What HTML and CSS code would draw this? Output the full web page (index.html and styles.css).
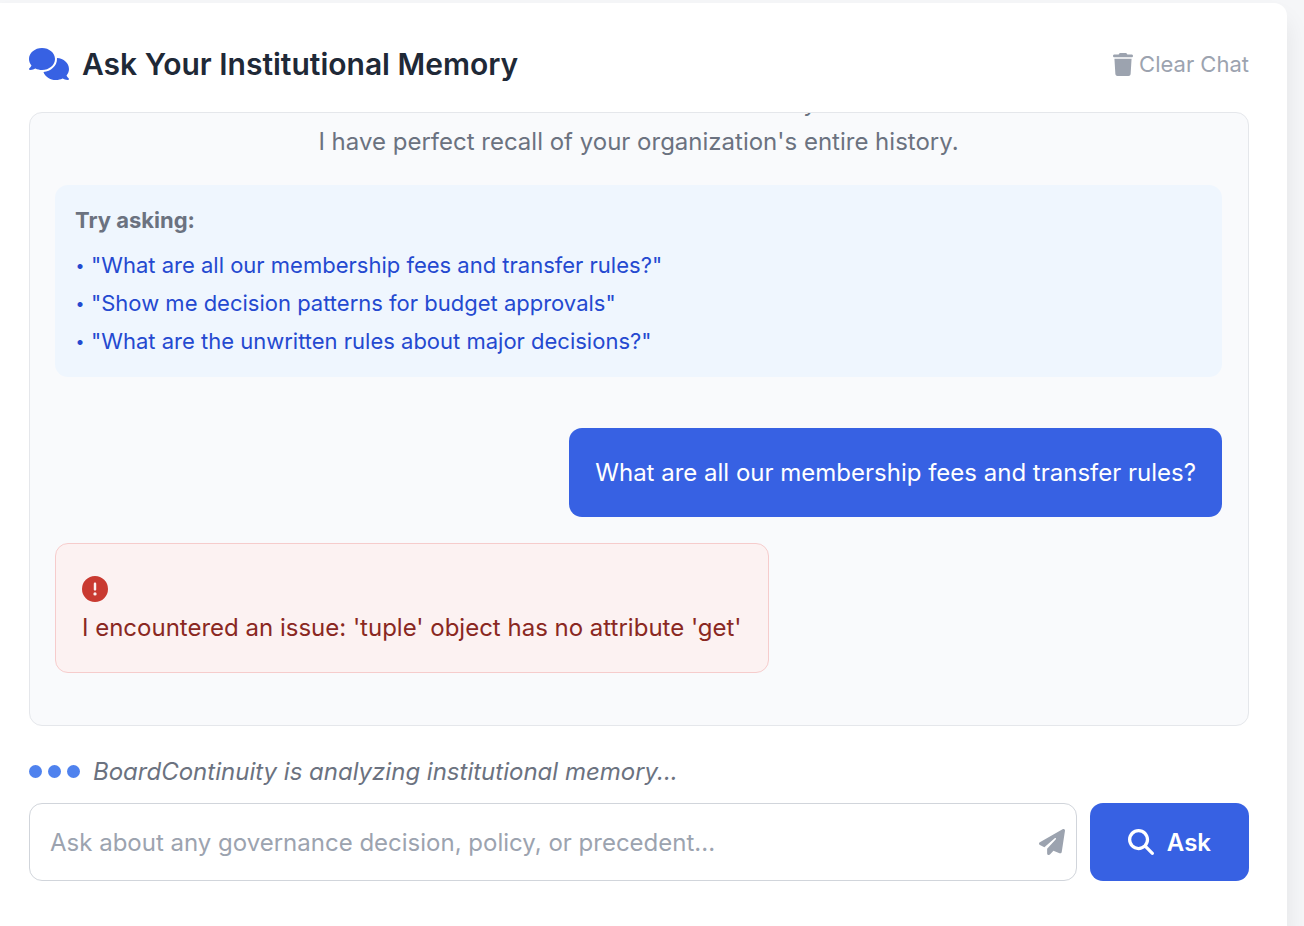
FILE: index.html
```html
<!DOCTYPE html>
<html lang="en">
<head>
<meta charset="utf-8">
<meta name="viewport" content="width=device-width, initial-scale=1">
<title>Ask Your Institutional Memory</title>
<link rel="stylesheet" href="styles.css">
</head>
<body>
<main class="card">
  <header class="card-header">
    <h1 class="title">
      <svg class="icon-comments" viewBox="0 0 640 512" aria-hidden="true"><path d="M208 352c114.900 0 208-78.800 208-176S322.900 0 208 0S0 78.800 0 176c0 38.600 14.700 74.300 39.600 103.400c-3.500 9.400-8.700 17.700-14.200 24.700c-4.800 6.200-9.700 11-13.300 14.300c-1.800 1.600-3.300 2.900-4.300 3.700c-.5 .4-.9 .7-1.100 .8l-.2 .2C1 327.200-1.400 334.400 .8 340.900S9.100 352 16 352c21.800 0 43.800-5.600 62.100-12.500c9.200-3.500 17.800-7.400 25.200-11.400C134.100 343.300 169.800 352 208 352zM448 176c0 112.300-99.100 196.900-216.500 207C255.800 457.400 336.400 512 432 512c38.200 0 73.900-8.700 104.700-23.900c7.500 4 16 7.900 25.200 11.400c18.300 6.900 40.300 12.500 62.100 12.500c6.900 0 13.100-4.500 15.200-11.100c2.100-6.600-.2-13.800-5.800-17.900l-.2-.2c-.2-.2-.6-.4-1.100-.8c-1-.8-2.500-2-4.300-3.700c-3.600-3.300-8.500-8.100-13.300-14.300c-5.500-7-10.700-15.400-14.200-24.700c24.900-29 39.600-64.700 39.600-103.400c0-92.800-84.900-168.900-192.600-175.500c.4 5.100 .6 10.300 .6 15.500z"/></svg>
      Ask Your Institutional Memory
    </h1>
    <button class="clear" type="button">
      <svg class="icon-trash" viewBox="0 0 448 512" aria-hidden="true"><path d="M135.200 17.700L128 32H32C14.300 32 0 46.300 0 64S14.300 96 32 96H416c17.700 0 32-14.300 32-32s-14.300-32-32-32H320l-7.200-14.300C307.400 6.800 296.300 0 284.200 0H163.800c-12.100 0-23.200 6.800-28.600 17.700zM416 128H32L53.200 467c1.600 25.300 22.600 45 47.900 45H346.900c25.300 0 46.300-19.700 47.900-45L416 128z"/></svg>
      Clear Chat
    </button>
  </header>

  <section class="chat" aria-label="Conversation">
    <div class="welcome">
      <p>Welcome! I am BoardContinuity</p>
      <p>I have perfect recall of your organization's entire history.</p>
    </div>
    <div class="suggestions">
      <p class="suggestions-title">Try asking:</p>
      <ul class="suggestion-list">
        <li><button class="suggestion" type="button"><span class="bullet">•</span>"What are all our membership fees and transfer rules?"</button></li>
        <li><button class="suggestion" type="button"><span class="bullet">•</span>"Show me decision patterns for budget approvals"</button></li>
        <li><button class="suggestion" type="button"><span class="bullet">•</span>"What are the unwritten rules about major decisions?"</button></li>
      </ul>
    </div>
    <p class="message message-user">What are all our membership fees and transfer rules?</p>
    <div class="message message-error" role="alert">
      <div class="error-icon"><svg class="icon-base" viewBox="0 0 512 512" aria-hidden="true"><path d="M256 512A256 256 0 1 0 256 0a256 256 0 1 0 0 512zm0-384c13.300 0 24 10.700 24 24V264c0 13.300-10.700 24-24 24s-24-10.700-24-24V152c0-13.300 10.700-24 24-24zM224 352a32 32 0 1 1 64 0 32 32 0 1 1 -64 0z"/></svg></div>
      <p>I encountered an issue: 'tuple' object has no attribute 'get'</p>
    </div>
  </section>

  <div class="typing" role="status">
    <span class="dots"><span class="dot"></span><span class="dot"></span><span class="dot"></span></span>
    <em>BoardContinuity is analyzing institutional memory...</em>
  </div>

  <form class="composer">
    <div class="field">
      <input class="question" type="text" aria-label="Your question" placeholder="Ask about any governance decision, policy, or precedent...">
      <svg class="icon-base icon-plane" viewBox="0 0 512 512" aria-hidden="true"><path d="M498.100 5.600c10.100 7 15.400 19.100 13.500 31.200l-64 416c-1.500 9.700-7.400 18.200-16 23s-18.900 5.400-28 1.600L284 427.700l-68.500 74.100c-8.900 9.700-22.900 12.900-35.200 8.100S160 493.200 160 480V396.400c0-4 1.500-7.800 4.200-10.700L331.800 202.800c5.800-6.300 5.600-16-.4-22s-15.700-6.400-22-.7L106 360.800 17.700 316.600C7.100 311.300 .3 300.700 0 288.900s5.900-22.800 16.100-28.700l448-256c10.700-6.100 23.900-5.500 34 1.400z"/></svg>
    </div>
    <button class="ask" type="submit">
      <svg class="icon-base" viewBox="0 0 512 512" aria-hidden="true"><path d="M416 208c0 45.900-14.900 88.300-40 122.700L502.600 457.400c12.500 12.500 12.500 32.800 0 45.300s-32.800 12.500-45.300 0L330.700 376c-34.400 25.200-76.800 40-122.700 40C93.100 416 0 322.900 0 208S93.100 0 208 0S416 93.100 416 208zM208 352a144 144 0 1 0 0-288 144 144 0 1 0 0 288z"/></svg>
      Ask
    </button>
  </form>
</main>
</body>
</html>
```

FILE: styles.css
```css
* {
  box-sizing: border-box;
}

body {
  display: flex;
  height: 100vh;
  min-height: 640px;
  margin: 0;
  padding: 3px 17px 0 0;
  background: #f5f6f8;
  color: #1f2937;
  font-family: Inter, "Liberation Sans", sans-serif;
  font-size: 24px;
  line-height: 39px;
}

h1, p, ul {
  margin: 0;
  padding: 0;
}

button, input {
  font: inherit;
}

button {
  border: 0;
  background: none;
  cursor: pointer;
}

svg {
  flex: none;
  fill: currentColor;
}

.card {
  display: flex;
  flex: 1;
  flex-direction: column;
  min-width: 0;
  padding: 40px 38px 45px 29px;
  border-radius: 0 13px 0 0;
  background: #fff;
  box-shadow: 0 16px 24px rgba(0, 0, 0, 0.08);
}

.card-header {
  display: flex;
  align-items: center;
  justify-content: space-between;
  margin-bottom: 27px;
}

.title {
  display: flex;
  align-items: center;
  gap: 13px;
  font-size: 30px;
  font-weight: 600;
  line-height: 42px;
}

.icon-comments {
  width: 40px;
  height: 32px;
  color: #3761e3;
}

.icon-base {
  width: 26px;
  height: 26px;
}

.clear {
  display: flex;
  align-items: center;
  gap: 6px;
  padding: 0;
  color: #9ca3af;
  font-size: 22px;
}

.icon-trash {
  width: 20px;
  height: 23px;
}

.chat {
  display: flex;
  flex: 1;
  flex-direction: column;
  justify-content: flex-end;
  min-height: 0;
  overflow: hidden;
  padding: 25px 26px 52px 25px;
  border: 1px solid #e5e7eb;
  border-radius: 13px;
  background: #f9fafc;
}

.welcome {
  margin-bottom: 24px;
  color: #6b7280;
  text-align: center;
}

.suggestions {
  margin-bottom: 51px;
  padding: 16px 20px 17px;
  border-radius: 13px;
  background: #eff6fe;
  font-size: 22px;
  line-height: 38px;
}

.suggestions-title {
  margin-bottom: 7px;
  color: #6b7280;
  font-weight: 700;
}

.suggestion-list {
  list-style: none;
}

.suggestion {
  display: flex;
  gap: 6px;
  padding: 0;
  color: #2449d0;
  text-align: left;
}

.bullet {
  width: 10px;
  font-size: 16px;
  text-align: center;
}

.message {
  padding: 25px 26px;
  border-radius: 13px;
}

.message-user {
  align-self: flex-end;
  margin-bottom: 26px;
  background: #3761e3;
  color: #fff;
}

.message-error {
  align-self: flex-start;
  border: 1px solid #f6cccc;
  background: #fcf2f2;
  color: #8a2822;
}

.error-icon {
  display: flex;
  align-items: center;
  height: 39px;
  color: #c93a31;
}

.typing {
  display: flex;
  align-items: center;
  gap: 13px;
  margin: 26px 0 12px;
  color: #6b7280;
}

.dots {
  display: flex;
  gap: 6px;
}

.dot {
  width: 13px;
  height: 13px;
  border-radius: 50%;
  background: #4f82ee;
}

.composer {
  display: flex;
  gap: 13px;
}

.field {
  position: relative;
  display: flex;
  flex: 1;
  min-width: 0;
}

.question {
  flex: 1;
  min-width: 0;
  height: 78px;
  padding: 0 58px 0 20px;
  border: 1px solid #d1d5db;
  border-radius: 13px;
  background: #fff;
  color: #1f2937;
}

.question::placeholder {
  color: #9ca3af;
  opacity: 1;
}

.icon-plane {
  position: absolute;
  top: 26px;
  right: 12px;
  color: #9ca3af;
}

.ask {
  display: flex;
  align-items: center;
  gap: 13px;
  padding: 0 38px;
  border-radius: 13px;
  background: #3761e3;
  color: #fff;
  font-weight: 600;
}
```
